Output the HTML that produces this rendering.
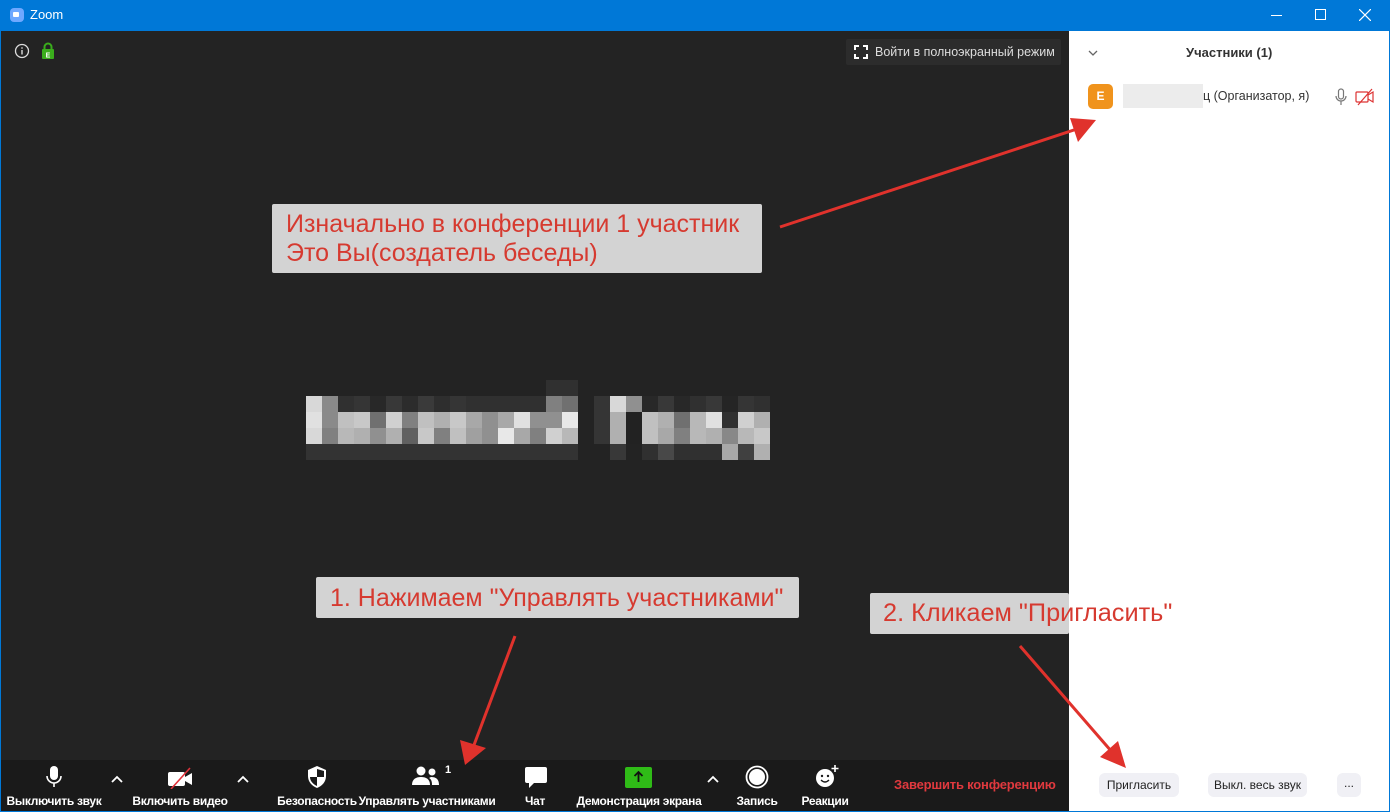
<!DOCTYPE html>
<html><head><meta charset="utf-8"><style>
*{margin:0;padding:0;box-sizing:border-box}
body{width:1390px;height:812px;overflow:hidden;background:#0078d7;font-family:"Liberation Sans","Noto Sans CJK SC",sans-serif;position:relative}
.abs{position:absolute}
#title{left:0;top:0;width:1390px;height:31px;background:#0078d7;color:#fff;font-size:13px}
#main{left:1px;top:31px;width:1068px;height:729px;background:#232323}
#tb{left:1px;top:760px;width:1068px;height:51px;background:#1a1a1a}
#panel{left:1069px;top:31px;width:320px;height:780px;background:#fff}
.lbl{position:absolute;top:794px;color:#fff;font-size:12px;white-space:nowrap;transform:translateX(-50%);font-weight:bold;letter-spacing:-0.3px}
.note{position:absolute;background:#d3d3d3;color:#d63a30;font-size:25px;line-height:29px;border-radius:2px;white-space:nowrap}
.px{position:absolute;width:16px;height:16px}
.btn{position:absolute;top:773px;height:24px;background:#f0f0f5;border-radius:6px;font-size:12px;color:#222;line-height:24px;text-align:center}
</style></head><body>
<div id="title" class="abs">
 <div class="abs" style="left:10px;top:8px;width:14px;height:14px;background:#6ea8ff;border-radius:4px"></div>
 <div class="abs" style="left:13px;top:12px;width:6px;height:5px;background:#fff;border-radius:1px"></div>
 <div class="abs" style="left:30px;top:7px">Zoom</div>
 <div class="abs" style="left:1271px;top:15px;width:11px;height:1px;background:#fff"></div>
 <div class="abs" style="left:1315px;top:9px;width:11px;height:11px;border:1px solid #fff"></div>
 <svg class="abs" style="left:1359px;top:9px" width="12" height="12"><path d="M0 0L12 12M12 0L0 12" stroke="#fff" stroke-width="1.2"/></svg>
</div>
<div id="main" class="abs"></div>
<div id="tb" class="abs"></div>
<div id="panel" class="abs"></div>

<svg class="abs" style="left:14px;top:43px" width="16" height="16"><circle cx="8" cy="8" r="6.5" fill="none" stroke="#ddd" stroke-width="1.3"/><rect x="7.3" y="7" width="1.4" height="4.5" fill="#ddd"/><rect x="7.3" y="4.3" width="1.4" height="1.4" fill="#ddd"/></svg>
<svg class="abs" style="left:41px;top:42px" width="14" height="17"><path d="M3.5 7V5a3.5 3.5 0 0 1 7 0v2" fill="none" stroke="#3aad1c" stroke-width="2"/><rect x="1" y="7" width="12" height="10" rx="1" fill="#3aad1c"/><text x="7" y="15.5" font-size="7" fill="#fff" text-anchor="middle" font-family="Liberation Sans" font-weight="bold">E</text></svg>

<div class="abs" style="left:846px;top:39px;width:215px;height:26px;background:#2c2c2c;border-radius:2px"></div>
<svg class="abs" style="left:854px;top:45px" width="14" height="14"><path d="M1 5V1h4M9 1h4v4M13 9v4H9M5 13H1V9" fill="none" stroke="#fff" stroke-width="2"/></svg>
<div class="abs" style="left:875px;top:45px;color:#ddd;font-size:12.5px">Войти в полноэкранный режим</div>

<div class="abs" style="left:546px;top:380px;width:32px;height:16px;background:#303030"></div>
<div class="abs" style="left:0;top:0">
<div class="px" style="left:306px;top:396px;background:#d8d8d8"></div><div class="px" style="left:322px;top:396px;background:#8a8a8a"></div><div class="px" style="left:338px;top:396px;background:#303030"></div><div class="px" style="left:354px;top:396px;background:#353535"></div><div class="px" style="left:370px;top:396px;background:#282828"></div><div class="px" style="left:386px;top:396px;background:#383838"></div><div class="px" style="left:402px;top:396px;background:#2c2c2c"></div><div class="px" style="left:418px;top:396px;background:#3a3a3a"></div><div class="px" style="left:434px;top:396px;background:#2e2e2e"></div><div class="px" style="left:450px;top:396px;background:#353535"></div><div class="px" style="left:466px;top:396px;background:#303030"></div><div class="px" style="left:482px;top:396px;background:#303030"></div><div class="px" style="left:498px;top:396px;background:#303030"></div><div class="px" style="left:514px;top:396px;background:#303030"></div><div class="px" style="left:530px;top:396px;background:#303030"></div><div class="px" style="left:546px;top:396px;background:#808080"></div><div class="px" style="left:562px;top:396px;background:#707070"></div>
<div class="px" style="left:306px;top:412px;background:#e0e0e0"></div><div class="px" style="left:322px;top:412px;background:#8a8a8a"></div><div class="px" style="left:338px;top:412px;background:#c0c0c0"></div><div class="px" style="left:354px;top:412px;background:#c8c8c8"></div><div class="px" style="left:370px;top:412px;background:#707070"></div><div class="px" style="left:386px;top:412px;background:#d0d0d0"></div><div class="px" style="left:402px;top:412px;background:#808080"></div><div class="px" style="left:418px;top:412px;background:#c0c0c0"></div><div class="px" style="left:434px;top:412px;background:#b0b0b0"></div><div class="px" style="left:450px;top:412px;background:#c8c8c8"></div><div class="px" style="left:466px;top:412px;background:#a8a8a8"></div><div class="px" style="left:482px;top:412px;background:#909090"></div><div class="px" style="left:498px;top:412px;background:#a8a8a8"></div><div class="px" style="left:514px;top:412px;background:#e0e0e0"></div><div class="px" style="left:530px;top:412px;background:#909090"></div><div class="px" style="left:546px;top:412px;background:#909090"></div><div class="px" style="left:562px;top:412px;background:#e8e8e8"></div>
<div class="px" style="left:306px;top:428px;background:#d8d8d8"></div><div class="px" style="left:322px;top:428px;background:#808080"></div><div class="px" style="left:338px;top:428px;background:#b8b8b8"></div><div class="px" style="left:354px;top:428px;background:#b0b0b0"></div><div class="px" style="left:370px;top:428px;background:#909090"></div><div class="px" style="left:386px;top:428px;background:#b0b0b0"></div><div class="px" style="left:402px;top:428px;background:#606060"></div><div class="px" style="left:418px;top:428px;background:#c8c8c8"></div><div class="px" style="left:434px;top:428px;background:#808080"></div><div class="px" style="left:450px;top:428px;background:#c0c0c0"></div><div class="px" style="left:466px;top:428px;background:#a0a0a0"></div><div class="px" style="left:482px;top:428px;background:#909090"></div><div class="px" style="left:498px;top:428px;background:#e8e8e8"></div><div class="px" style="left:514px;top:428px;background:#a8a8a8"></div><div class="px" style="left:530px;top:428px;background:#808080"></div><div class="px" style="left:546px;top:428px;background:#d0d0d0"></div><div class="px" style="left:562px;top:428px;background:#b8b8b8"></div>
<div class="px" style="left:306px;top:444px;width:272px;background:#333"></div>
<div class="px" style="left:594px;top:396px;height:48px;background:#353535"></div>
<div class="px" style="left:610px;top:396px;background:#d8d8d8"></div><div class="px" style="left:626px;top:396px;background:#909090"></div><div class="px" style="left:642px;top:396px;background:#282828"></div><div class="px" style="left:658px;top:396px;background:#383838"></div><div class="px" style="left:674px;top:396px;background:#282828"></div><div class="px" style="left:690px;top:396px;background:#303030"></div><div class="px" style="left:706px;top:396px;background:#383838"></div><div class="px" style="left:722px;top:396px;background:#252525"></div><div class="px" style="left:738px;top:396px;background:#353535"></div><div class="px" style="left:754px;top:396px;background:#303030"></div>
<div class="px" style="left:610px;top:412px;background:#b0b0b0"></div><div class="px" style="left:626px;top:412px;background:#222"></div><div class="px" style="left:642px;top:412px;background:#c0c0c0"></div><div class="px" style="left:658px;top:412px;background:#b0b0b0"></div><div class="px" style="left:674px;top:412px;background:#707070"></div><div class="px" style="left:690px;top:412px;background:#b8b8b8"></div><div class="px" style="left:706px;top:412px;background:#e0e0e0"></div><div class="px" style="left:722px;top:412px;background:#303030"></div><div class="px" style="left:738px;top:412px;background:#d0d0d0"></div><div class="px" style="left:754px;top:412px;background:#b0b0b0"></div>
<div class="px" style="left:610px;top:428px;background:#b0b0b0"></div><div class="px" style="left:626px;top:428px;background:#222"></div><div class="px" style="left:642px;top:428px;background:#c0c0c0"></div><div class="px" style="left:658px;top:428px;background:#a8a8a8"></div><div class="px" style="left:674px;top:428px;background:#808080"></div><div class="px" style="left:690px;top:428px;background:#b8b8b8"></div><div class="px" style="left:706px;top:428px;background:#b0b0b0"></div><div class="px" style="left:722px;top:428px;background:#888"></div><div class="px" style="left:738px;top:428px;background:#b8b8b8"></div><div class="px" style="left:754px;top:428px;background:#c8c8c8"></div>
<div class="px" style="left:610px;top:444px;background:#383838"></div><div class="px" style="left:642px;top:444px;background:#303030"></div><div class="px" style="left:658px;top:444px;background:#484848"></div><div class="px" style="left:674px;top:444px;width:48px;background:#303030"></div><div class="px" style="left:722px;top:444px;background:#a8a8a8"></div><div class="px" style="left:738px;top:444px;background:#404040"></div><div class="px" style="left:754px;top:444px;background:#b0b0b0"></div>
</div>

<svg class="abs" style="left:44px;top:765px" width="20" height="24"><rect x="6" y="1" width="8" height="14" rx="4" fill="#fff"/><path d="M3 11a7 7 0 0 0 14 0M10 18v4" fill="none" stroke="#fff" stroke-width="1.6"/></svg>
<svg class="abs" style="left:110px;top:774px" width="14" height="10"><path d="M2 8l5-5 5 5" fill="none" stroke="#fff" stroke-width="1.8"/></svg>
<svg class="abs" style="left:166px;top:767px" width="30" height="22"><rect x="2" y="5" width="17" height="14" rx="2" fill="#fff"/><path d="M19 10l7-4v12l-7-4z" fill="#fff"/><path d="M5 22L24 1" stroke="#e0323a" stroke-width="1.6"/></svg>
<svg class="abs" style="left:236px;top:774px" width="14" height="10"><path d="M2 8l5-5 5 5" fill="none" stroke="#fff" stroke-width="1.8"/></svg>
<svg class="abs" style="left:306px;top:765px" width="22" height="24"><path d="M11 1L2 5v6c0 6 4 10 9 12 5-2 9-6 9-12V5z" fill="#fff"/><path d="M11 4v8H4c0 4 3 7 7 9v-9h7V6z" fill="#1a1a1a"/></svg>
<svg class="abs" style="left:411px;top:766px" width="30" height="20"><circle cx="10" cy="5" r="4.5" fill="#fff"/><path d="M1 19c0-6 4-8 9-8s9 2 9 8z" fill="#fff"/><circle cx="21" cy="6" r="3.5" fill="#fff"/><path d="M20 11c5 0 8 2 8 8h-7c0-4-1-6-3-7z" fill="#fff"/></svg>
<div class="abs" style="left:445px;top:764px;color:#fff;font-size:11px;font-weight:bold">1</div>
<svg class="abs" style="left:524px;top:766px" width="24" height="24"><path d="M3 1h18a2 2 0 0 1 2 2v12a2 2 0 0 1-2 2H10l-5 5v-5H3a2 2 0 0 1-2-2V3a2 2 0 0 1 2-2z" fill="#fff"/></svg>
<div class="abs" style="left:625px;top:767px;width:27px;height:21px;background:#2fbb17;border-radius:2px"></div>
<svg class="abs" style="left:632px;top:770px" width="13" height="14"><path d="M6.5 2v10M2.5 6l4-4 4 4" fill="none" stroke="#111" stroke-width="1.8"/></svg>
<svg class="abs" style="left:706px;top:774px" width="14" height="10"><path d="M2 8l5-5 5 5" fill="none" stroke="#fff" stroke-width="1.8"/></svg>
<svg class="abs" style="left:745px;top:765px" width="24" height="24"><circle cx="12" cy="12" r="10.5" fill="none" stroke="#fff" stroke-width="1.8"/><circle cx="12" cy="12" r="8" fill="#fff"/></svg>
<svg class="abs" style="left:814px;top:764px" width="26" height="26"><circle cx="11" cy="14" r="9" fill="#fff"/><circle cx="8" cy="12" r="1.2" fill="#1a1a1a"/><circle cx="14" cy="12" r="1.2" fill="#1a1a1a"/><path d="M7 16q4 4 8 0" fill="none" stroke="#1a1a1a" stroke-width="1.3"/><path d="M21 1v7M17.5 4.5h7" stroke="#fff" stroke-width="1.6"/></svg>

<div class="lbl" style="left:54px">Выключить звук</div>
<div class="lbl" style="left:180px">Включить видео</div>
<div class="lbl" style="left:317px">Безопасность</div>
<div class="lbl" style="left:427px">Управлять участниками</div>
<div class="lbl" style="left:535px">Чат</div>
<div class="lbl" style="left:639px">Демонстрация экрана</div>
<div class="lbl" style="left:757px">Запись</div>
<div class="lbl" style="left:825px">Реакции</div>
<div class="abs" style="left:894px;top:777px;color:#e0393e;font-size:13px;font-weight:bold;letter-spacing:-0.2px">Завершить конференцию</div>

<svg class="abs" style="left:1088px;top:49px" width="10" height="8"><path d="M1 2l4 4 4-4" fill="none" stroke="#666" stroke-width="1.3"/></svg>
<div class="abs" style="left:1186px;top:45px;font-size:13px;font-weight:bold;color:#333">Участники (1)</div>
<div class="abs" style="left:1088px;top:84px;width:25px;height:25px;background:#f0931c;border-radius:5px;color:#fff;font-size:12px;font-weight:bold;text-align:center;line-height:25px">E</div>
<div class="abs" style="left:1123px;top:84px;width:80px;height:24px;background:#ececec"></div>
<div class="abs" style="left:1203px;top:89px;font-size:12.5px;color:#333">ц (Организатор, я)</div>
<svg class="abs" style="left:1334px;top:88px" width="14" height="18"><rect x="4.5" y="1" width="5" height="10" rx="2.5" fill="none" stroke="#777" stroke-width="1.2"/><path d="M2 8a5 5 0 0 0 10 0M7 13v4" fill="none" stroke="#777" stroke-width="1.2"/></svg>
<svg class="abs" style="left:1355px;top:88px" width="20" height="18"><rect x="1" y="4" width="12" height="10" rx="1" fill="none" stroke="#d33" stroke-width="1.2"/><path d="M13 7l5-3v10l-5-3" fill="none" stroke="#d33" stroke-width="1.2"/><path d="M3 17L17 1" stroke="#d33" stroke-width="1.2"/></svg>
<div class="btn" style="left:1099px;width:80px">Пригласить</div>
<div class="btn" style="left:1208px;width:99px">Выкл. весь звук</div>
<div class="btn" style="left:1337px;width:24px;line-height:20px">...</div>

<div class="note" style="left:272px;top:204px;width:490px;height:69px;padding:6px 14px">Изначально в конференции 1 участник<br>Это Вы(создатель беседы)</div>
<div class="note" style="left:316px;top:577px;width:483px;height:41px;padding:7px 14px">1. Нажимаем "Управлять участниками"</div>
<div class="note" style="left:870px;top:593px;width:199px;height:41px"></div>
<div class="abs" style="left:883px;top:599px;color:#d63a30;font-size:25.3px;line-height:29px;white-space:nowrap">2. Кликаем "Пригласить"</div>

<svg class="abs" style="left:0;top:0" width="1390" height="812">
<g stroke="#e0322c" stroke-width="3" fill="#e0322c">
<line x1="780" y1="227" x2="1080" y2="128"/>
<polygon points="1096,120 1070,118 1078,142" stroke="none"/>
<line x1="515" y1="636" x2="474" y2="745"/>
<polygon points="465,765 460,740 486,748" stroke="none"/>
<line x1="1020" y1="646" x2="1112" y2="752"/>
<polygon points="1126,768 1100,757 1118,741" stroke="none"/>
</g></svg>
</body></html>
